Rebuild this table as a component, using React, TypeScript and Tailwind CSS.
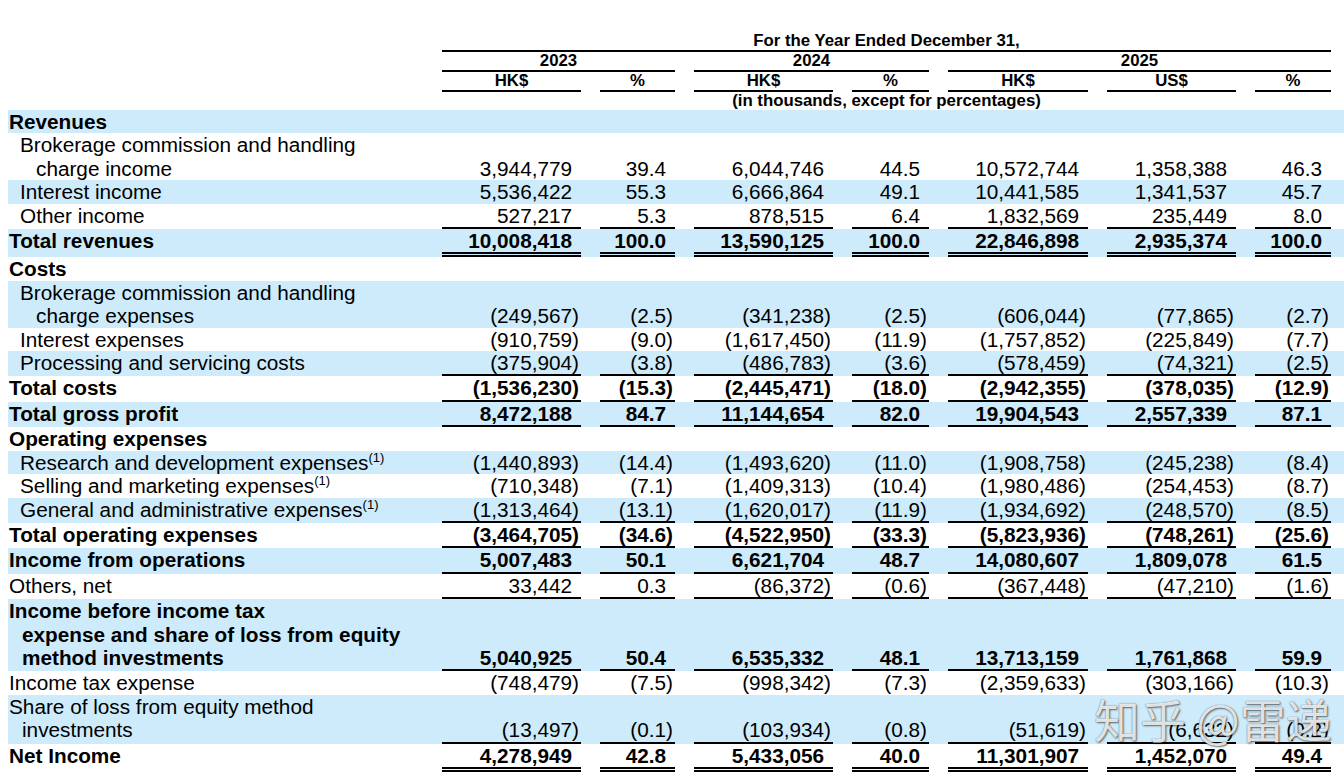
import React from "react";

type Line = { text: React.ReactNode; indent: number };

interface IRow {
  lines: Line[];
  bold?: boolean;
  blue?: boolean;
  values?: string[];
  rule?: "single" | "double";
}

const fn = <sup className="text-[13px] relative -top-[8px]">(1)</sup>;

const rows: IRow[] = [
  { lines: [{ text: "Revenues", indent: 1 }], bold: true, blue: true },
  {
    lines: [
      { text: "Brokerage commission and handling", indent: 12 },
      { text: "charge income", indent: 28 },
    ],
    values: ["3,944,779", "39.4", "6,044,746", "44.5", "10,572,744", "1,358,388", "46.3"],
  },
  {
    lines: [{ text: "Interest income", indent: 12 }],
    blue: true,
    values: ["5,536,422", "55.3", "6,666,864", "49.1", "10,441,585", "1,341,537", "45.7"],
  },
  {
    lines: [{ text: "Other income", indent: 12 }],
    values: ["527,217", "5.3", "878,515", "6.4", "1,832,569", "235,449", "8.0"],
    rule: "single",
  },
  {
    lines: [{ text: "Total revenues", indent: 1 }],
    bold: true,
    blue: true,
    values: ["10,008,418", "100.0", "13,590,125", "100.0", "22,846,898", "2,935,374", "100.0"],
    rule: "double",
  },
  { lines: [{ text: "Costs", indent: 1 }], bold: true },
  {
    lines: [
      { text: "Brokerage commission and handling", indent: 12 },
      { text: "charge expenses", indent: 28 },
    ],
    blue: true,
    values: ["(249,567)", "(2.5)", "(341,238)", "(2.5)", "(606,044)", "(77,865)", "(2.7)"],
  },
  {
    lines: [{ text: "Interest expenses", indent: 12 }],
    values: ["(910,759)", "(9.0)", "(1,617,450)", "(11.9)", "(1,757,852)", "(225,849)", "(7.7)"],
  },
  {
    lines: [{ text: "Processing and servicing costs", indent: 12 }],
    blue: true,
    values: ["(375,904)", "(3.8)", "(486,783)", "(3.6)", "(578,459)", "(74,321)", "(2.5)"],
    rule: "single",
  },
  {
    lines: [{ text: "Total costs", indent: 1 }],
    bold: true,
    values: ["(1,536,230)", "(15.3)", "(2,445,471)", "(18.0)", "(2,942,355)", "(378,035)", "(12.9)"],
    rule: "single",
  },
  {
    lines: [{ text: "Total gross profit", indent: 1 }],
    bold: true,
    blue: true,
    values: ["8,472,188", "84.7", "11,144,654", "82.0", "19,904,543", "2,557,339", "87.1"],
    rule: "single",
  },
  { lines: [{ text: "Operating expenses", indent: 1 }], bold: true },
  {
    lines: [{ text: <>Research and development expenses{fn}</>, indent: 12 }],
    blue: true,
    values: ["(1,440,893)", "(14.4)", "(1,493,620)", "(11.0)", "(1,908,758)", "(245,238)", "(8.4)"],
  },
  {
    lines: [{ text: <>Selling and marketing expenses{fn}</>, indent: 12 }],
    values: ["(710,348)", "(7.1)", "(1,409,313)", "(10.4)", "(1,980,486)", "(254,453)", "(8.7)"],
  },
  {
    lines: [{ text: <>General and administrative expenses{fn}</>, indent: 12 }],
    blue: true,
    values: ["(1,313,464)", "(13.1)", "(1,620,017)", "(11.9)", "(1,934,692)", "(248,570)", "(8.5)"],
    rule: "single",
  },
  {
    lines: [{ text: "Total operating expenses", indent: 1 }],
    bold: true,
    values: ["(3,464,705)", "(34.6)", "(4,522,950)", "(33.3)", "(5,823,936)", "(748,261)", "(25.6)"],
    rule: "single",
  },
  {
    lines: [{ text: "Income from operations", indent: 1 }],
    bold: true,
    blue: true,
    values: ["5,007,483", "50.1", "6,621,704", "48.7", "14,080,607", "1,809,078", "61.5"],
    rule: "single",
  },
  {
    lines: [{ text: "Others, net", indent: 1 }],
    values: ["33,442", "0.3", "(86,372)", "(0.6)", "(367,448)", "(47,210)", "(1.6)"],
    rule: "single",
  },
  {
    lines: [
      { text: "Income before income tax", indent: 1 },
      { text: "expense and share of loss from equity", indent: 14 },
      { text: "method investments", indent: 14 },
    ],
    bold: true,
    blue: true,
    values: ["5,040,925", "50.4", "6,535,332", "48.1", "13,713,159", "1,761,868", "59.9"],
    rule: "single",
  },
  {
    lines: [{ text: "Income tax expense", indent: 1 }],
    values: ["(748,479)", "(7.5)", "(998,342)", "(7.3)", "(2,359,633)", "(303,166)", "(10.3)"],
  },
  {
    lines: [
      { text: "Share of loss from equity method", indent: 1 },
      { text: "investments", indent: 14 },
    ],
    blue: true,
    values: ["(13,497)", "(0.1)", "(103,934)", "(0.8)", "(51,619)", "(6,632)", "(0.2)"],
    rule: "single",
  },
  {
    lines: [{ text: "Net Income", indent: 1 }],
    bold: true,
    values: ["4,278,949", "42.8", "5,433,056", "40.0", "11,301,907", "1,452,070", "49.4"],
    rule: "double",
  },
];

const grid =
  "grid grid-cols-[415px_139px_75px_139px_77px_140px_129px_76px] gap-x-[19px]";

function Value({ v, rule }: { v: string; rule?: IRow["rule"] }) {
  const neg = v.startsWith("(");
  return (
    <div
      className={
        "self-end text-right pr-[2px] whitespace-nowrap " +
        (rule === "single"
          ? "border-b-2 border-black"
          : rule === "double"
          ? "border-b-[5px] border-double border-black"
          : "")
      }
    >
      {v}
      {!neg && <span className="invisible">)</span>}
    </div>
  );
}

function TableRow({ row }: { row: IRow }) {
  const pad = row.rule === "single" ? "pb-[2px]" : row.rule === "double" ? "pb-[5px]" : "";
  return (
    <div className={grid + (row.blue ? " bg-[#cdebfb]" : "") + (row.bold ? " font-bold" : "")}>
      <div className={"whitespace-nowrap " + pad}>
        {row.lines.map((l, i) => (
          <div key={i} style={{ paddingLeft: l.indent }}>
            {l.text}
          </div>
        ))}
      </div>
      {row.values?.map((v, i) => <Value key={i} v={v} rule={row.rule} />)}
    </div>
  );
}

export default function App() {
  return (
    <div className="relative w-[1344px] h-[778px] overflow-hidden bg-white text-black font-['Liberation_Sans',Arial,sans-serif]">
      <div className="ml-[8px] pt-[32px]">
        {/* column headings */}
        <div className={grid + " text-[16.8px] font-bold leading-[18px] text-center"}>
          <div className="col-start-2 col-span-7 border-b-2 border-black whitespace-nowrap">
            For the Year Ended December 31,
          </div>
          <div className="col-start-2 col-span-2 border-b-2 border-black">2023</div>
          <div className="col-start-4 col-span-2 border-b-2 border-black">2024</div>
          <div className="col-start-6 col-span-3 border-b-2 border-black">2025</div>
          <div className="col-start-2 border-b-2 border-black">HK$</div>
          <div className="border-b-2 border-black">%</div>
          <div className="border-b-2 border-black">HK$</div>
          <div className="border-b-2 border-black">%</div>
          <div className="border-b-2 border-black">HK$</div>
          <div className="border-b-2 border-black">US$</div>
          <div className="border-b-2 border-black">%</div>
          <div className="col-start-2 col-span-7 leading-[18px] whitespace-nowrap">
            (in thousands, except for percentages)
          </div>
        </div>

        <div className="text-[20.75px] leading-[23.4px]">
          {rows.map((r, i) => (
            <TableRow key={i} row={r} />
          ))}
        </div>
      </div>

      {/* watermark */}
      <div className="absolute left-[1094px] top-[695px] text-[46px] leading-none font-normal text-white/85 font-['Noto_Sans_CJK_SC',sans-serif] [text-shadow:1px_1px_2px_rgba(0,0,0,0.55),0_0_1px_rgba(0,0,0,0.6)] whitespace-nowrap">
        知乎 @雷递
      </div>
    </div>
  );
}
